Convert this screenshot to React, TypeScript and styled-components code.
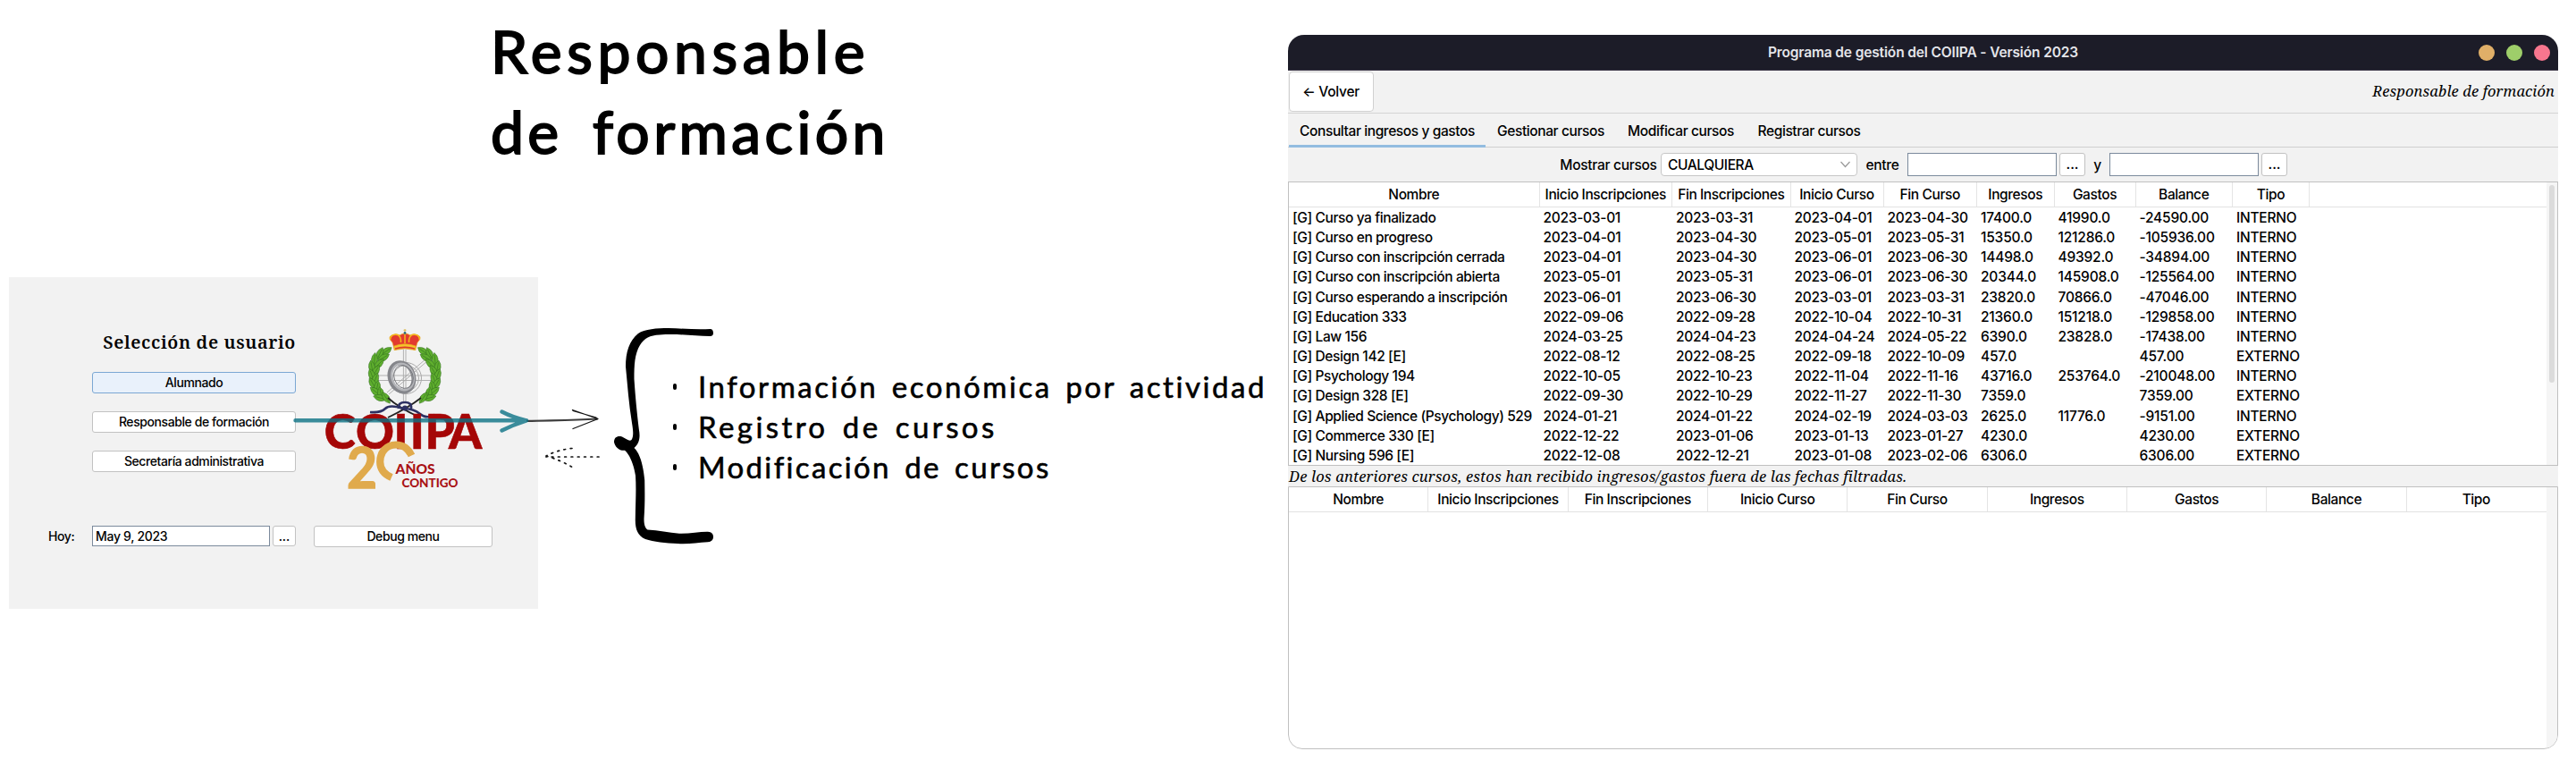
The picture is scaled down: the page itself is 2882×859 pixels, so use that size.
import React from "react";
import styled, { createGlobalStyle } from "styled-components";

const Global = createGlobalStyle`
  * { box-sizing: border-box; }
  html, body { margin: 0; padding: 0; background: #fff; }
  body { font-family: Inter, "Liberation Sans", sans-serif; color: #000; }
  button, input { font: inherit; letter-spacing: inherit; color: inherit; }
`;

/* ---------- whiteboard ---------- */

const Board = styled.main`
  position: relative;
  width: 2882px;
  height: 859px;
  overflow: hidden;
  background: #fff;
`;

const Heading = styled.h1`
  position: absolute;
  left: 549px;
  top: 12px;
  margin: 0;
  font: 400 66px/90px Lato, "Open Sans", sans-serif;
  word-spacing: 12px;
  white-space: nowrap;
  -webkit-text-stroke: 2px #000;
`;

const HeadingLine = styled.span<{ $spacing: number }>`
  display: block;
  letter-spacing: ${(p) => p.$spacing}px;
`;

const Notes = styled.ul`
  position: absolute;
  left: 753px;
  top: 410px;
  margin: 0;
  padding: 0;
  list-style: none;
  font: 400 33px/45px Lato, "Open Sans", sans-serif;
  -webkit-text-stroke: 0.6px #000;
`;

const Note = styled.li<{ $spacing: number }>`
  display: flex;
  align-items: center;
  gap: 24px;
  height: 45px;
  white-space: nowrap;
  letter-spacing: ${(p) => p.$spacing}px;
  word-spacing: 4.5px;

  &::before {
    content: "";
    width: 4px;
    height: 7px;
    border-radius: 2px;
    background: #000;
  }
`;

const Sketch = styled.svg`
  position: absolute;
  left: 320px;
  top: 350px;
  overflow: visible;
`;

/* ---------- user selection panel ---------- */

const UserPanel = styled.section`
  position: absolute;
  left: 10px;
  top: 310px;
  width: 592px;
  height: 371px;
  padding: 59px 50px 0 43px;
  background: #f2f2f2;
  font-size: 14px;
  font-weight: 500;
  letter-spacing: -0.42px;
`;

const PanelTop = styled.div`
  display: flex;
  justify-content: space-between;
  height: 219px;
`;

const UserChoices = styled.div`
  display: flex;
  flex-direction: column;
  gap: 20px;
  width: 228px;
  margin-left: 50px;
`;

const PanelTitle = styled.h2`
  margin: 4px 0 3px;
  text-align: right;
  font: 600 20px/20px "Noto Serif", "DejaVu Serif", serif;
  letter-spacing: 0.62px;
  white-space: nowrap;
`;

const Button = styled.button<{ $primary?: boolean; $width?: number }>`
  flex: none;
  width: ${(p) => (p.$width ? `${p.$width}px` : "auto")};
  height: 24px;
  padding: 0;
  border: 1px solid ${(p) => (p.$primary ? "#7ba7d3" : "#c2c2c2")};
  border-radius: 3px;
  background: ${(p) => (p.$primary ? "#e9f1fb" : "#fff")};
  line-height: 20px;
`;

const PanelBottom = styled.div`
  display: flex;
  align-items: flex-start;
`;

const TodayLabel = styled.label`
  width: 50px;
  padding-left: 1px;
  line-height: 24px;
`;

const DateInput = styled.input<{ $width: number; $height: number }>`
  width: ${(p) => p.$width}px;
  height: ${(p) => p.$height}px;
  padding: 0 3px 1px;
  border: 1px solid #7b8a9c;
  border-radius: 0;
  background: #fff;
  letter-spacing: -0.3px;
`;

const MoreButton = styled(Button)<{ $height: number }>`
  height: ${(p) => p.$height}px;
  margin-left: 3px;
  letter-spacing: 0;
`;

const DebugSlot = styled.div`
  display: flex;
  margin-left: 20px;
`;

const Logo = styled.svg`
  flex: none;
  width: 180px;
  height: 180px;
  margin: -2px 10px 0 0;
  overflow: visible;
  letter-spacing: 0;
`;

/* ---------- application window ---------- */

const Window = styled.section`
  position: absolute;
  left: 1441px;
  top: 39px;
  width: 1421px;
  height: 799px;
  display: flex;
  flex-direction: column;
  overflow: hidden;
  border-radius: 18px 18px 16px 16px;
  background: #f2f2f2;
  font-size: 15.5px;
  font-weight: 500;
  letter-spacing: -0.4px;
  white-space: nowrap;
`;

const TitleBar = styled.header`
  display: grid;
  grid-template-columns: 1fr auto 1fr;
  align-items: center;
  flex: none;
  height: 40px;
  padding: 0 9.5px;
  background: #1c1c28;
  border-bottom: 1px solid #3a3545;
  color: #e4e5ea;
  font-weight: 600;
  letter-spacing: -0.14px;
`;

const WindowTitle = styled.span`
  grid-column: 2;
`;

const WindowControls = styled.div`
  display: flex;
  justify-content: flex-end;
  gap: 13px;
`;

const ControlDot = styled.i<{ $color: string }>`
  width: 18px;
  height: 18px;
  border-radius: 50%;
  background: ${(p) => p.$color};
`;

const Toolbar = styled.div`
  display: flex;
  align-items: center;
  justify-content: space-between;
  flex: none;
  height: 48px;
  padding: 1px 4px 2px 0;
  border-bottom: 1px solid #d4d4d4;
`;

const BackButton = styled.button`
  width: 95px;
  height: 45px;
  margin-left: 0.5px;
  border: 1px solid #d0d0d0;
  border-radius: 4px;
  background: #fff;
  letter-spacing: -0.25px;
`;

const Role = styled.span`
  font: italic 400 16.5px/20px "Noto Serif", "DejaVu Serif", serif;
  letter-spacing: 0.13px;
`;

const Tabs = styled.nav`
  display: flex;
  flex: none;
  height: 38px;
  padding-left: 1px;
  border-bottom: 1px solid #cfcfcf;
`;

const Tab = styled.a<{ $active?: boolean; $width: number }>`
  width: ${(p) => p.$width}px;
  height: 38px;
  text-align: center;
  line-height: 39px;
  border-bottom: 3px solid ${(p) => (p.$active ? "#93bce0" : "transparent")};
`;

const Filters = styled.div`
  display: flex;
  align-items: center;
  flex: none;
  height: 38px;
  padding-left: 300px;
`;

const FilterLabel = styled.span<{ $width: number }>`
  width: ${(p) => p.$width}px;
  text-align: center;
  letter-spacing: -0.28px;
`;

const Select = styled.div`
  display: flex;
  align-items: center;
  justify-content: space-between;
  width: 220px;
  height: 26px;
  padding: 0 7px;
  border: 1px solid #c6c6c6;
  border-radius: 4px;
  background: #fff;
`;

const TableFrame = styled.div<{ $height: number; $last?: boolean }>`
  display: flex;
  flex: none;
  height: ${(p) => p.$height}px;
  border: 1px solid #c0c0c0;
  border-radius: ${(p) => (p.$last ? "0 0 16px 16px" : "0")};
  background: #fff;
  overflow: hidden;
`;

const TableView = styled.div`
  flex: 1;
  overflow: hidden;
`;

const HeaderRow = styled.div<{ $columns: string }>`
  display: grid;
  grid-template-columns: ${(p) => p.$columns};
  height: 28px;
  border-bottom: 1px solid #e2e2e2;
`;

const HeaderCell = styled.span`
  border-right: 1px solid #e4e4e4;
  text-align: center;
  line-height: 27px;

  &:last-child {
    border-right-color: transparent;
  }
`;

const Row = styled.div<{ $columns: string }>`
  display: grid;
  grid-template-columns: ${(p) => p.$columns};
  height: 22.17px;
  line-height: 23.5px;
`;

const Cell = styled.span<{ $spacing: number }>`
  padding-left: 4px;
  letter-spacing: ${(p) => p.$spacing}px;
`;

const ScrollTrack = styled.div`
  flex: none;
  width: 12px;
  padding: 3px 3px 0;
  background: #f5f5f5;
`;

const ScrollThumb = styled.div`
  height: 221px;
  border-radius: 3px;
  background: #dbdbdb;
`;

const Hint = styled.p`
  flex: none;
  height: 23px;
  margin: 0;
  padding-left: 1px;
  font: italic 400 16.5px/24px "Noto Serif", "DejaVu Serif", serif;
  letter-spacing: 0.19px;
`;

const COURSE_COLUMNS = "280.5px 148.5px 132.5px 104px 104.5px 86.5px 91px 108.5px 86px 1fr";
const EXTRA_COLUMNS = "repeat(9, 1fr)";

const HEADERS = [
  "Nombre", "Inicio Inscripciones", "Fin Inscripciones", "Inicio Curso",
  "Fin Curso", "Ingresos", "Gastos", "Balance", "Tipo",
];

const COURSES: string[][] = [
  ["[G] Curso ya finalizado", "2023-03-01", "2023-03-31", "2023-04-01", "2023-04-30", "17400.0", "41990.0", "-24590.00", "INTERNO"],
  ["[G] Curso en progreso", "2023-04-01", "2023-04-30", "2023-05-01", "2023-05-31", "15350.0", "121286.0", "-105936.00", "INTERNO"],
  ["[G] Curso con inscripción cerrada", "2023-04-01", "2023-04-30", "2023-06-01", "2023-06-30", "14498.0", "49392.0", "-34894.00", "INTERNO"],
  ["[G] Curso con inscripción abierta", "2023-05-01", "2023-05-31", "2023-06-01", "2023-06-30", "20344.0", "145908.0", "-125564.00", "INTERNO"],
  ["[G] Curso esperando a inscripción", "2023-06-01", "2023-06-30", "2023-03-01", "2023-03-31", "23820.0", "70866.0", "-47046.00", "INTERNO"],
  ["[G] Education 333", "2022-09-06", "2022-09-28", "2022-10-04", "2022-10-31", "21360.0", "151218.0", "-129858.00", "INTERNO"],
  ["[G] Law 156", "2024-03-25", "2024-04-23", "2024-04-24", "2024-05-22", "6390.0", "23828.0", "-17438.00", "INTERNO"],
  ["[G] Design 142 [E]", "2022-08-12", "2022-08-25", "2022-09-18", "2022-10-09", "457.0", "", "457.00", "EXTERNO"],
  ["[G] Psychology 194", "2022-10-05", "2022-10-23", "2022-11-04", "2022-11-16", "43716.0", "253764.0", "-210048.00", "INTERNO"],
  ["[G] Design 328 [E]", "2022-09-30", "2022-10-29", "2022-11-27", "2022-11-30", "7359.0", "", "7359.00", "EXTERNO"],
  ["[G] Applied Science (Psychology) 529", "2024-01-21", "2024-01-22", "2024-02-19", "2024-03-03", "2625.0", "11776.0", "-9151.00", "INTERNO"],
  ["[G] Commerce 330 [E]", "2022-12-22", "2023-01-06", "2023-01-13", "2023-01-27", "4230.0", "", "4230.00", "EXTERNO"],
  ["[G] Nursing 596 [E]", "2022-12-08", "2022-12-21", "2023-01-08", "2023-02-06", "6306.0", "", "6306.00", "EXTERNO"],
];

// Leaves of the left half of the wreath: x, y, rotation
const LEAVES: [number, number, number][] = [
  [431, 393, -35], [424, 395.5, -65], [428, 400, -30], [418, 402, -85], [423, 407, -45],
  [415, 410.5, -100], [419.5, 415, -60], [415, 419.5, -110], [419, 424, -70], [416, 429, -120],
  [421, 433, -80], [419, 438, -140], [425, 440, -100], [424, 445, -165], [431, 445, -125],
];

const Wreath = () => (
  <g fill="#5fae2e" stroke="#2d6a1c" strokeWidth="0.5">
    {LEAVES.map(([x, y, r]) => (
      <path key={`${x}-${y}`} d="M-7.500 0Q0 -7 7.500 0Q0 7 -7.500 0ZM-5 0H5" transform={`translate(${x} ${y}) rotate(${r})`} />
    ))}
  </g>
);

const CoiipaLogo = () => (
  <Logo viewBox="361 367 180 180" fontFamily="Lato, 'Open Sans', sans-serif" fontWeight="900">
    <g stroke="#a9a9a9" fill="none">
      <path d="M450.4 391V450M453 391V450M421 420H482M421 425.5H482M432 439L476 401M434 441L478 403" strokeWidth="0.9" />
      <circle cx="453" cy="423" r="17.5" strokeWidth="1" />
      <circle cx="453" cy="423" r="14.5" strokeWidth="1" />
    </g>
    <g fill="none">
      <ellipse cx="448.5" cy="422" rx="13" ry="16.5" transform="rotate(-20 448 422)" stroke="#85868b" strokeWidth="5" />
      <ellipse cx="449.5" cy="421.5" rx="12" ry="15" transform="rotate(-20 449.5 421.5)" stroke="#b4b5b9" strokeWidth="2.4" />
      <ellipse cx="450.5" cy="421.5" rx="10.5" ry="13.2" transform="rotate(-20 450.5 421.5)" stroke="#6e6f74" strokeWidth="0.8" />
    </g>
    <Wreath />
    <g transform="translate(903.6 0) scale(-1 1)"><Wreath /></g>
    <path d="M433 445Q445 456 469 467M470 445Q456 456 433 467" stroke="#222" strokeWidth="1.8" fill="none" />
    <path d="M413 461Q425 462 430 457T450 457Q462 457 469 463T485 464M445 457Q444 450 452 450T459 457" stroke="#2d3163" strokeWidth="2.6" fill="none" />
    <circle cx="452" cy="456.5" r="3" fill="#2d3163" />
    <g stroke="#e9a91c" strokeWidth="0.7">
      <path d="M440.5 391.5L438 383Q432 377 437.5 375Q442 372.5 446 375Q452 371 458 375Q462 372.5 466.5 375Q472 377 466 383L463.5 391.5Q452 388.5 440.5 391.5Z" fill="#e23b30" />
      <path d="M440 391.5Q452 387 464 391.5V387Q452 382.5 440 387Z" fill="#f5c52c" />
      <path d="M435.5 380Q436 373 444 374.5Q448 377 447.5 383M468.5 380Q468 373 460 374.5Q456 377 456.5 383M452 384V373" fill="none" stroke="#f5b91c" strokeWidth="1.5" />
    </g>
    <path d="M441 390Q452 386.5 463 390" stroke="#dd3a2f" strokeWidth="1.6" fill="none" />
    <circle cx="452" cy="372.500" r="1.4" fill="#2f6e7c" />
    <path d="M452 368V371M450.5 369.300H453.500" stroke="#d8b23a" strokeWidth="0.9" />
    <text y="502.3" x="361.7 397 439.500 457.800 474.500 501" fontSize="53" fill="#a50707" stroke="#a50707" strokeWidth="0.6">COIIPA</text>
    <text x="387" y="545.5" fontSize="64" fontWeight="700" fill="#e0aa4c" stroke="#e0aa4c" strokeWidth="1.5" textLength="34" lengthAdjust="spacingAndGlyphs">2</text>
    <path d="M459.5 509.5C455.5 501.5 449.5 497.5 442 497.5C431 497.5 424.2 506 424.2 516.5C424.2 524.5 429 530.5 437 534" stroke="#e0aa4c" strokeWidth="8.2" fill="none" />
    <g fill="#a91216">
      <text x="441.5" y="530.3" fontSize="15.5" textLength="44" lengthAdjust="spacingAndGlyphs">AÑOS</text>
      <text x="448.5" y="545" fontSize="13.3" textLength="63" lengthAdjust="spacingAndGlyphs">CONTIGO</text>
    </g>
  </Logo>
);

const Arrows = () => (
  <Sketch width="490" height="260" viewBox="320 350 490 260" fill="none" strokeLinecap="round" strokeLinejoin="round">
    <path d="M590 470.8C615 470 640 470.5 668 468.5" stroke="#3c3c3c" strokeWidth="2.2" />
    <path d="M640.5 458.5L669 468.5L641 479.5M641 459.5L667 467" stroke="#111" strokeWidth="1.3" />
    <path d="M670 511H611M640 501.5Q624 503 611 510M611 510Q628 515 641 523" stroke="#111" strokeWidth="1.7" strokeDasharray="1.8 5.5" />
    <path d="M330.5 470.3H589M561.5 460.5Q574 467 589 470.3Q574 475 561.5 481.5" stroke="#0b7285" strokeOpacity="0.8" strokeWidth="4.4" />
    <path
      d="M794.5 368C797 368 798 370 798 372.5C798 374.500 797 376 794.5 376C775 375.5 757 373 738 374.5C727 375 721 378 716 386C710 396 709.5 408 709.5 424C711 446 712.5 460 714.8 480C716.5 489 715.5 496 709.5 501C717 508 720 524 721.2 537C721.5 555 721.5 565 720.5 580C720.5 585 721 590 724.5 592.5C737 593 748 596 760 596.8C772 597 783 594.5 792 594.7C796 595 798 597 798 600.5C798 603.5 796 606 792 606.3C780 607 770 608.8 758 608C745 607.5 731 606 722 603C713 599 710.5 591 710.8 580C711 562 712 548 711 532C709 520 705 509 699 503.8C693 504.5 688 500 687 494.5C687 489 691 487 696 488.5C701 491 704 494 706.5 492C709 488 708.5 482 707 473C703.5 452 702 430 700 410C700 394 704 381 714 373C721 368 735 367 748 367C765 367.5 780 369 794.5 368Z"
      fill="#000"
    />
  </Sketch>
);

const TableHeader = ({ columns, trailing }: { columns: string; trailing?: boolean }) => (
  <HeaderRow $columns={columns}>
    {HEADERS.map((h) => <HeaderCell key={h}>{h}</HeaderCell>)}
    {trailing && <HeaderCell />}
  </HeaderRow>
);

const cellSpacing = (i: number) => (i === 0 ? -0.4 : i < 5 ? -0.28 : i === 8 ? -0.25 : -0.2);

export default function App() {
  return (
    <Board>
      <Global />
      <Heading>
        <HeadingLine $spacing={5.6}>Responsable</HeadingLine>
        <HeadingLine $spacing={4.4}>de formación</HeadingLine>
      </Heading>

      <UserPanel>
        <PanelTop>
          <UserChoices>
            <PanelTitle>Selección de usuario</PanelTitle>
            <Button $primary>Alumnado</Button>
            <Button>Responsable de formación</Button>
            <Button>Secretaría administrativa</Button>
          </UserChoices>
          <CoiipaLogo />
        </PanelTop>
        <PanelBottom>
          <TodayLabel>Hoy:</TodayLabel>
          <DateInput $width={199} $height={23} defaultValue="May 9, 2023" />
          <MoreButton $width={26} $height={23}>...</MoreButton>
          <DebugSlot><Button $width={200}>Debug menu</Button></DebugSlot>
        </PanelBottom>
      </UserPanel>

      <Arrows />

      <Notes>
        <Note $spacing={2.55}>Información económica por actividad</Note>
        <Note $spacing={3.4}>Registro de cursos</Note>
        <Note $spacing={2.35}>Modificación de cursos</Note>
      </Notes>

      <Window>
        <TitleBar>
          <WindowTitle>Programa de gestión del COIIPA - Versión 2023</WindowTitle>
          <WindowControls>
            <ControlDot $color="#e0af68" />
            <ControlDot $color="#9ece6a" />
            <ControlDot $color="#f7768e" />
          </WindowControls>
        </TitleBar>
        <Toolbar>
          <BackButton>← Volver</BackButton>
          <Role>Responsable de formación</Role>
        </Toolbar>
        <Tabs>
          <Tab $active $width={220}>Consultar ingresos y gastos</Tab>
          <Tab $width={146}>Gestionar cursos</Tab>
          <Tab $width={145}>Modificar cursos</Tab>
          <Tab $width={142}>Registrar cursos</Tab>
        </Tabs>
        <Filters>
          <FilterLabel $width={117}>Mostrar cursos</FilterLabel>
          <Select>
            CUALQUIERA
            <svg width="11" height="8" viewBox="0 0 11 8" fill="none" stroke="#999" strokeWidth="1.2"><path d="M0.5 1L5.5 6.5L10.5 1" /></svg>
          </Select>
          <FilterLabel $width={56}>entre</FilterLabel>
          <DateInput $width={167} $height={26} />
          <MoreButton $width={29} $height={26}>...</MoreButton>
          <FilterLabel $width={27}>y</FilterLabel>
          <DateInput $width={167} $height={26} />
          <MoreButton $width={29} $height={26}>...</MoreButton>
        </Filters>
        <TableFrame $height={318}>
          <TableView>
            <TableHeader columns={COURSE_COLUMNS} trailing />
            {COURSES.map((course) => (
              <Row key={course[0]} $columns={COURSE_COLUMNS}>
                {course.map((value, i) => <Cell key={i} $spacing={cellSpacing(i)}>{value}</Cell>)}
              </Row>
            ))}
          </TableView>
          <ScrollTrack><ScrollThumb /></ScrollTrack>
        </TableFrame>
        <Hint>De los anteriores cursos, estos han recibido ingresos/gastos fuera de las fechas filtradas.</Hint>
        <TableFrame $height={294} $last>
          <TableView>
            <TableHeader columns={EXTRA_COLUMNS} />
          </TableView>
          <ScrollTrack />
        </TableFrame>
      </Window>
    </Board>
  );
}
